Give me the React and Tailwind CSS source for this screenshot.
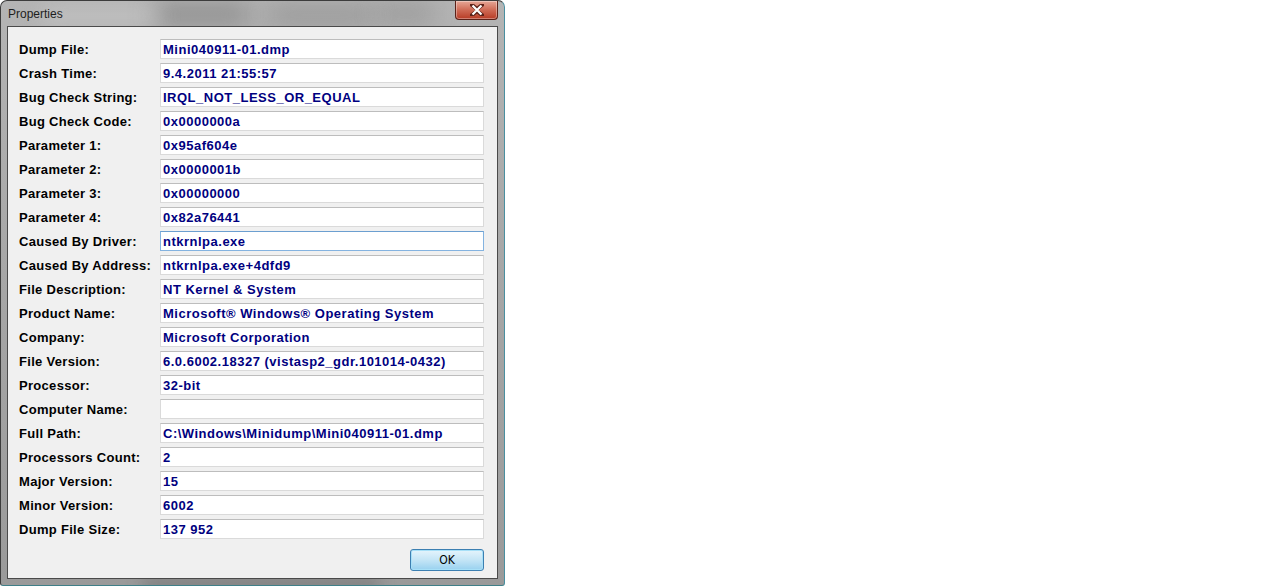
import React from 'react';

const rows = [
    { label: 'Dump File:', value: 'Mini040911-01.dmp' },
    { label: 'Crash Time:', value: '9.4.2011 21:55:57' },
    { label: 'Bug Check String:', value: 'IRQL_NOT_LESS_OR_EQUAL' },
    { label: 'Bug Check Code:', value: '0x0000000a' },
    { label: 'Parameter 1:', value: '0x95af604e' },
    { label: 'Parameter 2:', value: '0x0000001b' },
    { label: 'Parameter 3:', value: '0x00000000' },
    { label: 'Parameter 4:', value: '0x82a76441' },
    { label: 'Caused By Driver:', value: 'ntkrnlpa.exe', focused: true },
    { label: 'Caused By Address:', value: 'ntkrnlpa.exe+4dfd9' },
    { label: 'File Description:', value: 'NT Kernel & System' },
    { label: 'Product Name:', value: 'Microsoft® Windows® Operating System' },
    { label: 'Company:', value: 'Microsoft Corporation' },
    { label: 'File Version:', value: '6.0.6002.18327 (vistasp2_gdr.101014-0432)' },
    { label: 'Processor:', value: '32-bit' },
    { label: 'Computer Name:', value: '' },
    { label: 'Full Path:', value: 'C:\\Windows\\Minidump\\Mini040911-01.dmp' },
    { label: 'Processors Count:', value: '2' },
    { label: 'Major Version:', value: '15' },
    { label: 'Minor Version:', value: '6002' },
    { label: 'Dump File Size:', value: '137 952' },
];

// close button of the glass title bar
const CloseButton = () => (
    <div className="absolute right-[6px] top-0 w-[43px] h-[19px] rounded-b-[4px] border border-t-0 border-[#5b2118] bg-gradient-to-b from-[#e6a797] via-[#cf6a55] to-[#b73a24] flex items-center justify-center shadow-[inset_0_0_0_1px_rgba(255,255,255,0.35)]">
        <svg width="14" height="12" viewBox="0 0 14 12">
            <path d="M2 1 L7 5 L12 1 M2 11 L7 7 L12 11 M7 5 L7 7" stroke="#5b2118" strokeWidth="4" strokeLinecap="square" fill="none" />
            <path d="M2.5 1.5 L11.5 10.5 M11.5 1.5 L2.5 10.5" stroke="#ffffff" strokeWidth="2.2" fill="none" />
        </svg>
    </div>
);

const App = () => {
    return (
        <div className="flex w-[1280px] h-[586px] bg-white overflow-hidden" style={{ fontFamily: '"Liberation Sans", Arial, sans-serif' }}>
            <div className="relative w-[505px] h-[586px] flex flex-col rounded-t-[7px] rounded-b-[3px] border border-[#3c3c3c] border-b-[#3f7f88] border-r-[#4a8fa0] bg-gradient-to-b from-[#b4b4b4] via-[#a6a6a6] to-[#9a9a9a] overflow-hidden">
                {/* blurred glass background */}
                <div className="absolute left-[150px] top-[2px] w-[100px] h-[22px] rounded-full bg-[#6a6a6a] blur-[12px] opacity-50" />
                <div className="absolute left-[265px] top-[4px] w-[110px] h-[20px] rounded-full bg-[#767676] blur-[12px] opacity-45" />
                <div className="absolute left-[375px] top-[2px] w-[60px] h-[20px] rounded-full bg-[#7a7a7a] blur-[12px] opacity-45" />
                <div className="absolute left-[40px] top-[6px] w-[120px] h-[18px] rounded-full bg-[#d0d0d0] blur-[10px] opacity-50" />
                <div className="absolute left-[140px] bottom-[-6px] w-[240px] h-[14px] rounded-full bg-[#606060] blur-[8px] opacity-50" />

                <div className="relative h-[25px] shrink-0 pl-[7px] pt-[6px] text-[12px] text-[#1e1e1e] leading-[14px]">
                    Properties
                    <CloseButton />
                </div>

                <div className="relative flex-1 mx-[6px] mb-[6px] border border-[#4a4a4a] bg-[#f0f0f0] flex flex-col pt-[12px] pl-[11px] pr-[13px]">
                    <div className="flex flex-col gap-[4px]">
                        {rows.map((row) => (
                            <div key={row.label} className="flex items-start h-[20px]">
                                <div className="w-[141px] shrink-0 pt-[1px] text-[13px] font-bold tracking-[0.3px] text-black leading-[19px] whitespace-nowrap">{row.label}</div>
                                <div className={`flex-1 h-[20px] bg-white border ${row.focused ? 'border-[#84b3e0] border-t-[#6c9fd0]' : 'border-[#dadada] border-t-[#bdbdbd]'} pl-[2px] text-[13px] font-bold tracking-[0.5px] text-[#000080] leading-[19px] whitespace-nowrap`}>
                                    {row.value}
                                </div>
                            </div>
                        ))}
                    </div>
                    <div className="flex justify-end mt-[10px]">
                        <button className="w-[74px] h-[22px] rounded-[3px] border border-[#3c7fb1] bg-gradient-to-b from-[#e5f4fc] via-[#c4e5f6] to-[#98d1ef] shadow-[inset_0_0_0_1px_#a7e0f8] text-[12px] text-black leading-[20px]" style={{ fontFamily: '"DejaVu Sans Condensed", "Liberation Sans", sans-serif' }}>
                            OK
                        </button>
                    </div>
                </div>
            </div>
        </div>
    );
};

export default App;
